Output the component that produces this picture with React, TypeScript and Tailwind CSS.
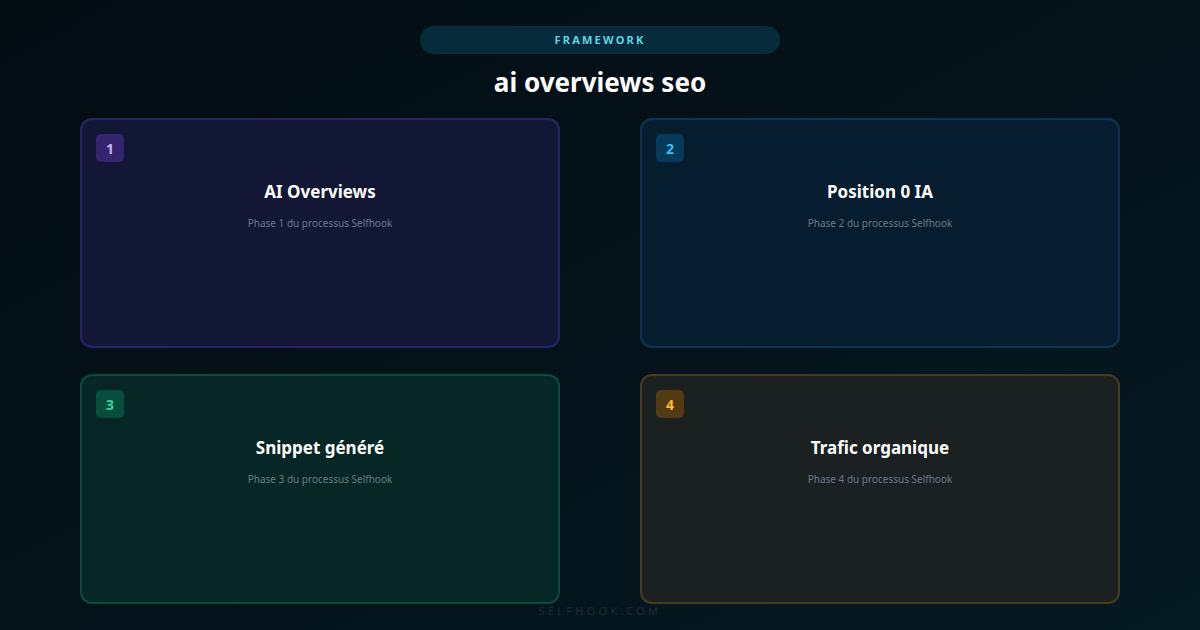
const cards = [
  { n: 1, title: 'AI Overviews', card: 'border-[#2a2466] bg-[#111735]', badge: 'bg-[#35246e] text-[#c4b5fd]' },
  { n: 2, title: 'Position 0 IA', card: 'border-[#0e3550] bg-[#061d30]', badge: 'bg-[#07395a] text-[#38bdf8]' },
  { n: 3, title: 'Snippet généré', card: 'border-[#0d4a3d] bg-[#062726]', badge: 'bg-[#064e3b] text-[#34d399]' },
  { n: 4, title: 'Trafic organique', card: 'border-[#4a3b1c] bg-[#1b2020]', badge: 'bg-[#533a12] text-[#fbbf24]' },
]

export default function App() {
  return (
    <div className="flex h-[630px] w-[1200px] flex-col items-center overflow-hidden bg-gradient-to-br from-[#020d12] via-[#04121a] to-[#061a24] pt-[26px] font-['Liberation_Sans']">
      <div className="flex h-[28px] w-[360px] items-center justify-center rounded-full bg-[#062b3a] text-[11px] font-bold tracking-[0.2em] text-[#5fd4e6]">
        FRAMEWORK
      </div>
      <h1 className="mt-[12px] text-[26px] font-bold leading-[32px] text-white">ai overviews seo</h1>
      <div className="mt-[20px] grid grid-cols-2 gap-x-[80px] gap-y-[26px]">
        {cards.map((c) => (
          <div key={c.n} className={`flex h-[230px] w-[480px] flex-col rounded-[12px] border-2 p-[14px] ${c.card}`}>
            <div className={`flex h-[28px] w-[28px] items-center justify-center rounded-[5px] text-[14px] font-bold ${c.badge}`}>
              {c.n}
            </div>
            <div className="mt-[17px] text-center text-[17px] font-bold text-white">{c.title}</div>
            <div className="mt-[11px] text-center text-[10px] text-[#6b7a8c]">Phase {c.n} du processus Selfhook</div>
          </div>
        ))}
      </div>
      <div className="-mt-[1px] text-[11px] tracking-[0.3em] text-[#1a2a36]">SELFHOOK.COM</div>
    </div>
  )
}
